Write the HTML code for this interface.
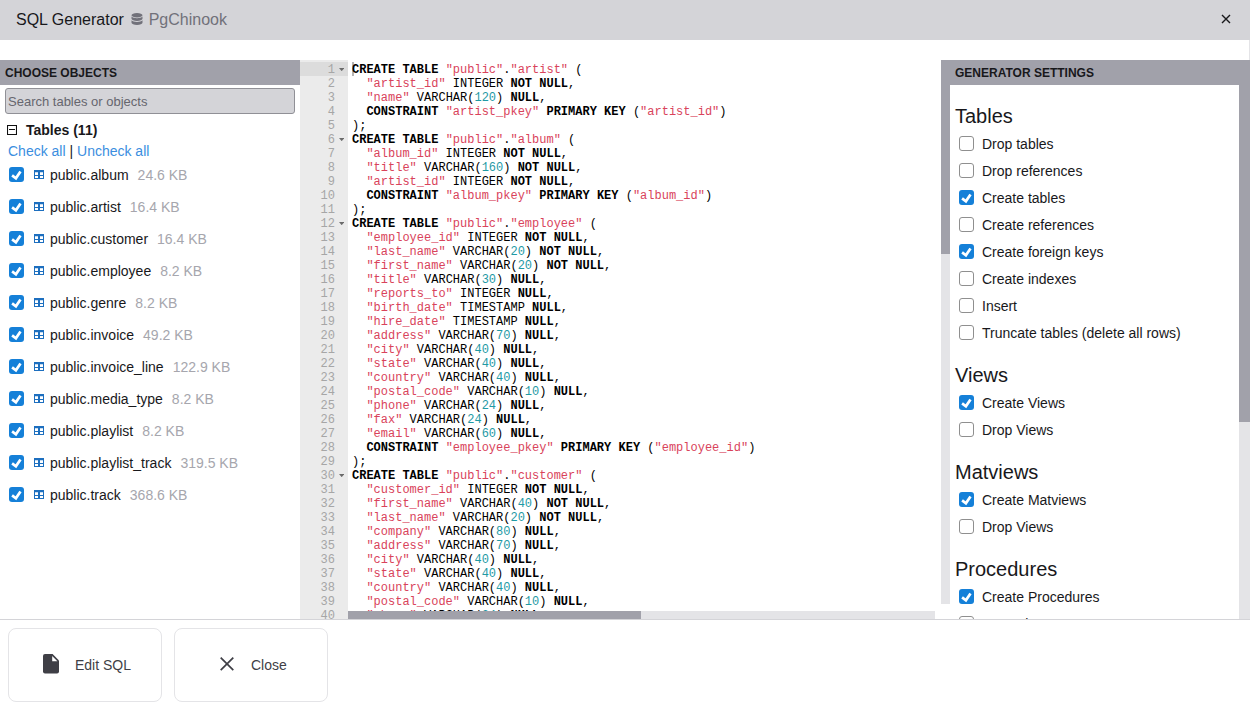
<!DOCTYPE html>
<html><head><meta charset="utf-8">
<style>
*{box-sizing:border-box;margin:0;padding:0}
html,body{width:1250px;height:720px;overflow:hidden;background:#fff;font-family:"Liberation Sans",sans-serif;color:#18181b}
.abs{position:absolute}
#title{left:0;top:0;width:1250px;height:40px;background:#d4d4d8}
#title .t{left:16px;top:11px;font-size:16px;line-height:18px;color:#18181b;white-space:nowrap}
#title .db{left:148.7px;top:11px;font-size:16px;line-height:18px;color:#71717a;white-space:nowrap}
.hdr{height:25px;background:#a1a1aa;font-weight:bold;font-size:12px;line-height:25px;padding-top:1px;color:#18181b;white-space:nowrap}
#search{left:5px;top:88px;width:290px;height:26px;border:1px solid #909096;border-radius:3px;background:#d4d4d8;font-size:13px;line-height:25px;padding-left:2px;color:#66666e;white-space:nowrap}
.cb{position:absolute;width:15px;height:15px;border-radius:3px}
.cb.on{background:#1580d8}
.cb.off{border:1px solid #8f8f8f;background:#fff}
.cb svg{position:absolute;left:0;top:0}
.row{position:absolute;font-size:14px;line-height:16px;white-space:nowrap;color:#18181b}
.row .sz{color:#a6a6ad;margin-left:9px}
.ti{position:absolute;width:10px;height:9px}
#gutter{left:300px;top:60px;width:48px;height:559px;background:#ebebeb;overflow:hidden}
#code{left:348px;top:60px;width:593px;height:551px;overflow:hidden}
.ln{position:absolute;right:13px;font-family:"Liberation Mono",monospace;font-size:12px;line-height:14px;color:#a6a6a6}
.cl{position:absolute;left:4px;font-family:"Liberation Mono",monospace;font-size:12px;line-height:14px;white-space:pre;color:#000}
.k{font-weight:bold}
.s{color:#d9435b}
.n{color:#1f9aa5}
.h{font-size:20px;line-height:24px;white-space:nowrap;color:#18181b}
.opt{font-size:14px;line-height:16px;white-space:nowrap;color:#18181b}
.btn{position:absolute;top:628px;width:154px;height:74px;border:1px solid #e4e4e7;border-radius:8px;background:#fff}
.btn .bt{position:absolute;top:28px;font-size:14px;line-height:16px;color:#3f3f46;white-space:nowrap}
</style></head><body>
<div id="title" class="abs">
  <div class="t abs">SQL Generator</div>
  <svg class="abs" style="left:131px;top:13px" width="12" height="12" viewBox="0 0 12 12"><g fill="#71717a"><ellipse cx="6" cy="2.2" rx="5.5" ry="2.2"/><path d="M0.5 3.6v2.2c0 1.2 2.5 2.2 5.5 2.2s5.5-1 5.5-2.2V3.6c-1 1-3.2 1.6-5.5 1.6S1.5 4.6.5 3.6z"/><path d="M0.5 7.3v2.5c0 1.2 2.5 2.2 5.5 2.2s5.5-1 5.5-2.2V7.3c-1 1-3.2 1.6-5.5 1.6S1.5 8.3.5 7.3z"/></g></svg>
  <div class="db abs">PgChinook</div>
  <svg class="abs" style="left:1221px;top:14px" width="10" height="10" viewBox="0 0 10 10"><path d="M1 1L9 9M9 1L1 9" stroke="#18181b" stroke-width="1.4"/></svg>
</div>

<!-- left panel -->
<div class="hdr abs" style="left:0;top:60px;width:300px;padding-left:5px">CHOOSE OBJECTS</div>
<div id="search" class="abs">Search tables or objects</div>

<svg class="abs" style="left:7px;top:125px" width="10" height="10" viewBox="0 0 10 10"><path d="M0.5 0.5h9v9h-9z" fill="none" stroke="#111" stroke-width="1.1"/><path d="M2 4.5h6" stroke="#111"/></svg>
<div class="row" style="left:26px;top:122px;font-weight:bold">Tables (11)</div>
<div class="row" style="left:8px;top:143px"><span style="color:#3b8ee0">Check all</span> | <span style="color:#3b8ee0">Uncheck all</span></div>
<div class="cb on" style="left:9px;top:167px"><svg width="15" height="15" viewBox="0 0 15 15"><path d="M3.1 8.4L6.9 11.3L11.5 4.4" fill="none" stroke="#fff" stroke-width="2.7"/></svg></div>
<svg class="ti" style="left:34px;top:170px" width="10" height="9" viewBox="0 0 10 9"><path d="M0 0h10v9H0z" fill="#1d6fbf"/><path d="M1 2.3h3v2.7H1zM6 2.3h3v2.7H6zM1 6h3v2H1zM6 6h3v2H6z" fill="#fff"/></svg>
<div class="row" style="left:50px;top:167px">public.album<span class="sz">24.6 KB</span></div>
<div class="cb on" style="left:9px;top:199px"><svg width="15" height="15" viewBox="0 0 15 15"><path d="M3.1 8.4L6.9 11.3L11.5 4.4" fill="none" stroke="#fff" stroke-width="2.7"/></svg></div>
<svg class="ti" style="left:34px;top:202px" width="10" height="9" viewBox="0 0 10 9"><path d="M0 0h10v9H0z" fill="#1d6fbf"/><path d="M1 2.3h3v2.7H1zM6 2.3h3v2.7H6zM1 6h3v2H1zM6 6h3v2H6z" fill="#fff"/></svg>
<div class="row" style="left:50px;top:199px">public.artist<span class="sz">16.4 KB</span></div>
<div class="cb on" style="left:9px;top:231px"><svg width="15" height="15" viewBox="0 0 15 15"><path d="M3.1 8.4L6.9 11.3L11.5 4.4" fill="none" stroke="#fff" stroke-width="2.7"/></svg></div>
<svg class="ti" style="left:34px;top:234px" width="10" height="9" viewBox="0 0 10 9"><path d="M0 0h10v9H0z" fill="#1d6fbf"/><path d="M1 2.3h3v2.7H1zM6 2.3h3v2.7H6zM1 6h3v2H1zM6 6h3v2H6z" fill="#fff"/></svg>
<div class="row" style="left:50px;top:231px">public.customer<span class="sz">16.4 KB</span></div>
<div class="cb on" style="left:9px;top:263px"><svg width="15" height="15" viewBox="0 0 15 15"><path d="M3.1 8.4L6.9 11.3L11.5 4.4" fill="none" stroke="#fff" stroke-width="2.7"/></svg></div>
<svg class="ti" style="left:34px;top:266px" width="10" height="9" viewBox="0 0 10 9"><path d="M0 0h10v9H0z" fill="#1d6fbf"/><path d="M1 2.3h3v2.7H1zM6 2.3h3v2.7H6zM1 6h3v2H1zM6 6h3v2H6z" fill="#fff"/></svg>
<div class="row" style="left:50px;top:263px">public.employee<span class="sz">8.2 KB</span></div>
<div class="cb on" style="left:9px;top:295px"><svg width="15" height="15" viewBox="0 0 15 15"><path d="M3.1 8.4L6.9 11.3L11.5 4.4" fill="none" stroke="#fff" stroke-width="2.7"/></svg></div>
<svg class="ti" style="left:34px;top:298px" width="10" height="9" viewBox="0 0 10 9"><path d="M0 0h10v9H0z" fill="#1d6fbf"/><path d="M1 2.3h3v2.7H1zM6 2.3h3v2.7H6zM1 6h3v2H1zM6 6h3v2H6z" fill="#fff"/></svg>
<div class="row" style="left:50px;top:295px">public.genre<span class="sz">8.2 KB</span></div>
<div class="cb on" style="left:9px;top:327px"><svg width="15" height="15" viewBox="0 0 15 15"><path d="M3.1 8.4L6.9 11.3L11.5 4.4" fill="none" stroke="#fff" stroke-width="2.7"/></svg></div>
<svg class="ti" style="left:34px;top:330px" width="10" height="9" viewBox="0 0 10 9"><path d="M0 0h10v9H0z" fill="#1d6fbf"/><path d="M1 2.3h3v2.7H1zM6 2.3h3v2.7H6zM1 6h3v2H1zM6 6h3v2H6z" fill="#fff"/></svg>
<div class="row" style="left:50px;top:327px">public.invoice<span class="sz">49.2 KB</span></div>
<div class="cb on" style="left:9px;top:359px"><svg width="15" height="15" viewBox="0 0 15 15"><path d="M3.1 8.4L6.9 11.3L11.5 4.4" fill="none" stroke="#fff" stroke-width="2.7"/></svg></div>
<svg class="ti" style="left:34px;top:362px" width="10" height="9" viewBox="0 0 10 9"><path d="M0 0h10v9H0z" fill="#1d6fbf"/><path d="M1 2.3h3v2.7H1zM6 2.3h3v2.7H6zM1 6h3v2H1zM6 6h3v2H6z" fill="#fff"/></svg>
<div class="row" style="left:50px;top:359px">public.invoice_line<span class="sz">122.9 KB</span></div>
<div class="cb on" style="left:9px;top:391px"><svg width="15" height="15" viewBox="0 0 15 15"><path d="M3.1 8.4L6.9 11.3L11.5 4.4" fill="none" stroke="#fff" stroke-width="2.7"/></svg></div>
<svg class="ti" style="left:34px;top:394px" width="10" height="9" viewBox="0 0 10 9"><path d="M0 0h10v9H0z" fill="#1d6fbf"/><path d="M1 2.3h3v2.7H1zM6 2.3h3v2.7H6zM1 6h3v2H1zM6 6h3v2H6z" fill="#fff"/></svg>
<div class="row" style="left:50px;top:391px">public.media_type<span class="sz">8.2 KB</span></div>
<div class="cb on" style="left:9px;top:423px"><svg width="15" height="15" viewBox="0 0 15 15"><path d="M3.1 8.4L6.9 11.3L11.5 4.4" fill="none" stroke="#fff" stroke-width="2.7"/></svg></div>
<svg class="ti" style="left:34px;top:426px" width="10" height="9" viewBox="0 0 10 9"><path d="M0 0h10v9H0z" fill="#1d6fbf"/><path d="M1 2.3h3v2.7H1zM6 2.3h3v2.7H6zM1 6h3v2H1zM6 6h3v2H6z" fill="#fff"/></svg>
<div class="row" style="left:50px;top:423px">public.playlist<span class="sz">8.2 KB</span></div>
<div class="cb on" style="left:9px;top:455px"><svg width="15" height="15" viewBox="0 0 15 15"><path d="M3.1 8.4L6.9 11.3L11.5 4.4" fill="none" stroke="#fff" stroke-width="2.7"/></svg></div>
<svg class="ti" style="left:34px;top:458px" width="10" height="9" viewBox="0 0 10 9"><path d="M0 0h10v9H0z" fill="#1d6fbf"/><path d="M1 2.3h3v2.7H1zM6 2.3h3v2.7H6zM1 6h3v2H1zM6 6h3v2H6z" fill="#fff"/></svg>
<div class="row" style="left:50px;top:455px">public.playlist_track<span class="sz">319.5 KB</span></div>
<div class="cb on" style="left:9px;top:487px"><svg width="15" height="15" viewBox="0 0 15 15"><path d="M3.1 8.4L6.9 11.3L11.5 4.4" fill="none" stroke="#fff" stroke-width="2.7"/></svg></div>
<svg class="ti" style="left:34px;top:490px" width="10" height="9" viewBox="0 0 10 9"><path d="M0 0h10v9H0z" fill="#1d6fbf"/><path d="M1 2.3h3v2.7H1zM6 2.3h3v2.7H6zM1 6h3v2H1zM6 6h3v2H6z" fill="#fff"/></svg>
<div class="row" style="left:50px;top:487px">public.track<span class="sz">368.6 KB</span></div>
<div class="abs" style="left:1249px;top:40px;width:1px;height:20px;background:#e4e4e7"></div>
<div id="gutter" class="abs">
<div class="abs" style="left:0;top:2px;width:48px;height:14px;background:#dcdcdc"></div>
<div class="ln" style="top:3px">1</div>
<svg class="abs" style="left:38.8px;top:8px" width="5.4" height="3.2" viewBox="0 0 5.4 3.2"><path d="M0 0h5.4L2.7 3.2z" fill="#6b6b6b"/></svg>
<div class="ln" style="top:17px">2</div>
<div class="ln" style="top:31px">3</div>
<div class="ln" style="top:45px">4</div>
<div class="ln" style="top:59px">5</div>
<div class="ln" style="top:73px">6</div>
<svg class="abs" style="left:38.8px;top:78px" width="5.4" height="3.2" viewBox="0 0 5.4 3.2"><path d="M0 0h5.4L2.7 3.2z" fill="#6b6b6b"/></svg>
<div class="ln" style="top:87px">7</div>
<div class="ln" style="top:101px">8</div>
<div class="ln" style="top:115px">9</div>
<div class="ln" style="top:129px">10</div>
<div class="ln" style="top:143px">11</div>
<div class="ln" style="top:157px">12</div>
<svg class="abs" style="left:38.8px;top:162px" width="5.4" height="3.2" viewBox="0 0 5.4 3.2"><path d="M0 0h5.4L2.7 3.2z" fill="#6b6b6b"/></svg>
<div class="ln" style="top:171px">13</div>
<div class="ln" style="top:185px">14</div>
<div class="ln" style="top:199px">15</div>
<div class="ln" style="top:213px">16</div>
<div class="ln" style="top:227px">17</div>
<div class="ln" style="top:241px">18</div>
<div class="ln" style="top:255px">19</div>
<div class="ln" style="top:269px">20</div>
<div class="ln" style="top:283px">21</div>
<div class="ln" style="top:297px">22</div>
<div class="ln" style="top:311px">23</div>
<div class="ln" style="top:325px">24</div>
<div class="ln" style="top:339px">25</div>
<div class="ln" style="top:353px">26</div>
<div class="ln" style="top:367px">27</div>
<div class="ln" style="top:381px">28</div>
<div class="ln" style="top:395px">29</div>
<div class="ln" style="top:409px">30</div>
<svg class="abs" style="left:38.8px;top:414px" width="5.4" height="3.2" viewBox="0 0 5.4 3.2"><path d="M0 0h5.4L2.7 3.2z" fill="#6b6b6b"/></svg>
<div class="ln" style="top:423px">31</div>
<div class="ln" style="top:437px">32</div>
<div class="ln" style="top:451px">33</div>
<div class="ln" style="top:465px">34</div>
<div class="ln" style="top:479px">35</div>
<div class="ln" style="top:493px">36</div>
<div class="ln" style="top:507px">37</div>
<div class="ln" style="top:521px">38</div>
<div class="ln" style="top:535px">39</div>
<div class="ln" style="top:549px">40</div>
</div>
<div id="code" class="abs">
<div class="abs" style="left:4px;top:2px;width:2px;height:14px;background:#b4b4b4"></div>
<div class="cl" style="top:3px"><span class="k">CREATE</span> <span class="k">TABLE</span> <span class="s">&quot;public&quot;</span>.<span class="s">&quot;artist&quot;</span> (</div>
<div class="cl" style="top:17px">  <span class="s">&quot;artist_id&quot;</span> INTEGER <span class="k">NOT</span> <span class="k">NULL</span>,</div>
<div class="cl" style="top:31px">  <span class="s">&quot;name&quot;</span> VARCHAR(<span class="n">120</span>) <span class="k">NULL</span>,</div>
<div class="cl" style="top:45px">  <span class="k">CONSTRAINT</span> <span class="s">&quot;artist_pkey&quot;</span> <span class="k">PRIMARY</span> <span class="k">KEY</span> (<span class="s">&quot;artist_id&quot;</span>)</div>
<div class="cl" style="top:59px">);</div>
<div class="cl" style="top:73px"><span class="k">CREATE</span> <span class="k">TABLE</span> <span class="s">&quot;public&quot;</span>.<span class="s">&quot;album&quot;</span> (</div>
<div class="cl" style="top:87px">  <span class="s">&quot;album_id&quot;</span> INTEGER <span class="k">NOT</span> <span class="k">NULL</span>,</div>
<div class="cl" style="top:101px">  <span class="s">&quot;title&quot;</span> VARCHAR(<span class="n">160</span>) <span class="k">NOT</span> <span class="k">NULL</span>,</div>
<div class="cl" style="top:115px">  <span class="s">&quot;artist_id&quot;</span> INTEGER <span class="k">NOT</span> <span class="k">NULL</span>,</div>
<div class="cl" style="top:129px">  <span class="k">CONSTRAINT</span> <span class="s">&quot;album_pkey&quot;</span> <span class="k">PRIMARY</span> <span class="k">KEY</span> (<span class="s">&quot;album_id&quot;</span>)</div>
<div class="cl" style="top:143px">);</div>
<div class="cl" style="top:157px"><span class="k">CREATE</span> <span class="k">TABLE</span> <span class="s">&quot;public&quot;</span>.<span class="s">&quot;employee&quot;</span> (</div>
<div class="cl" style="top:171px">  <span class="s">&quot;employee_id&quot;</span> INTEGER <span class="k">NOT</span> <span class="k">NULL</span>,</div>
<div class="cl" style="top:185px">  <span class="s">&quot;last_name&quot;</span> VARCHAR(<span class="n">20</span>) <span class="k">NOT</span> <span class="k">NULL</span>,</div>
<div class="cl" style="top:199px">  <span class="s">&quot;first_name&quot;</span> VARCHAR(<span class="n">20</span>) <span class="k">NOT</span> <span class="k">NULL</span>,</div>
<div class="cl" style="top:213px">  <span class="s">&quot;title&quot;</span> VARCHAR(<span class="n">30</span>) <span class="k">NULL</span>,</div>
<div class="cl" style="top:227px">  <span class="s">&quot;reports_to&quot;</span> INTEGER <span class="k">NULL</span>,</div>
<div class="cl" style="top:241px">  <span class="s">&quot;birth_date&quot;</span> TIMESTAMP <span class="k">NULL</span>,</div>
<div class="cl" style="top:255px">  <span class="s">&quot;hire_date&quot;</span> TIMESTAMP <span class="k">NULL</span>,</div>
<div class="cl" style="top:269px">  <span class="s">&quot;address&quot;</span> VARCHAR(<span class="n">70</span>) <span class="k">NULL</span>,</div>
<div class="cl" style="top:283px">  <span class="s">&quot;city&quot;</span> VARCHAR(<span class="n">40</span>) <span class="k">NULL</span>,</div>
<div class="cl" style="top:297px">  <span class="s">&quot;state&quot;</span> VARCHAR(<span class="n">40</span>) <span class="k">NULL</span>,</div>
<div class="cl" style="top:311px">  <span class="s">&quot;country&quot;</span> VARCHAR(<span class="n">40</span>) <span class="k">NULL</span>,</div>
<div class="cl" style="top:325px">  <span class="s">&quot;postal_code&quot;</span> VARCHAR(<span class="n">10</span>) <span class="k">NULL</span>,</div>
<div class="cl" style="top:339px">  <span class="s">&quot;phone&quot;</span> VARCHAR(<span class="n">24</span>) <span class="k">NULL</span>,</div>
<div class="cl" style="top:353px">  <span class="s">&quot;fax&quot;</span> VARCHAR(<span class="n">24</span>) <span class="k">NULL</span>,</div>
<div class="cl" style="top:367px">  <span class="s">&quot;email&quot;</span> VARCHAR(<span class="n">60</span>) <span class="k">NULL</span>,</div>
<div class="cl" style="top:381px">  <span class="k">CONSTRAINT</span> <span class="s">&quot;employee_pkey&quot;</span> <span class="k">PRIMARY</span> <span class="k">KEY</span> (<span class="s">&quot;employee_id&quot;</span>)</div>
<div class="cl" style="top:395px">);</div>
<div class="cl" style="top:409px"><span class="k">CREATE</span> <span class="k">TABLE</span> <span class="s">&quot;public&quot;</span>.<span class="s">&quot;customer&quot;</span> (</div>
<div class="cl" style="top:423px">  <span class="s">&quot;customer_id&quot;</span> INTEGER <span class="k">NOT</span> <span class="k">NULL</span>,</div>
<div class="cl" style="top:437px">  <span class="s">&quot;first_name&quot;</span> VARCHAR(<span class="n">40</span>) <span class="k">NOT</span> <span class="k">NULL</span>,</div>
<div class="cl" style="top:451px">  <span class="s">&quot;last_name&quot;</span> VARCHAR(<span class="n">20</span>) <span class="k">NOT</span> <span class="k">NULL</span>,</div>
<div class="cl" style="top:465px">  <span class="s">&quot;company&quot;</span> VARCHAR(<span class="n">80</span>) <span class="k">NULL</span>,</div>
<div class="cl" style="top:479px">  <span class="s">&quot;address&quot;</span> VARCHAR(<span class="n">70</span>) <span class="k">NULL</span>,</div>
<div class="cl" style="top:493px">  <span class="s">&quot;city&quot;</span> VARCHAR(<span class="n">40</span>) <span class="k">NULL</span>,</div>
<div class="cl" style="top:507px">  <span class="s">&quot;state&quot;</span> VARCHAR(<span class="n">40</span>) <span class="k">NULL</span>,</div>
<div class="cl" style="top:521px">  <span class="s">&quot;country&quot;</span> VARCHAR(<span class="n">40</span>) <span class="k">NULL</span>,</div>
<div class="cl" style="top:535px">  <span class="s">&quot;postal_code&quot;</span> VARCHAR(<span class="n">10</span>) <span class="k">NULL</span>,</div>
<div class="cl" style="top:549px">  <span class="s">&quot;phone&quot;</span> VARCHAR(<span class="n">24</span>) <span class="k">NULL</span>,</div>
</div>
<div class="abs" style="left:941px;top:60px;width:9px;height:544px;background:#e4e4e7"></div>
<div class="abs" style="left:941px;top:60px;width:9px;height:194px;background:#a1a1aa"></div>
<div class="abs" style="left:348px;top:611px;width:587px;height:8px;background:#e4e4e7"></div>
<div class="abs" style="left:348px;top:611px;width:293px;height:8px;background:#a1a1aa"></div>
<div class="hdr abs" style="left:941px;top:60px;width:309px;padding-left:14px">GENERATOR SETTINGS</div>
<div class="abs" style="left:1239px;top:85px;width:11px;height:534px;background:#e4e4e7"></div>
<div class="abs" style="left:1239px;top:60px;width:11px;height:362px;background:#a1a1aa"></div>
<div class="abs" style="left:950px;top:85px;width:289px;height:534px;overflow:hidden">
<div class="h abs" style="left:5px;top:19.3px">Tables</div>
<div class="cb off" style="left:9px;top:51.30000000000001px"></div>
<div class="opt abs" style="left:32px;top:51.3px">Drop tables</div>
<div class="cb off" style="left:9px;top:78.30000000000001px"></div>
<div class="opt abs" style="left:32px;top:78.3px">Drop references</div>
<div class="cb on" style="left:9px;top:105.30000000000001px"><svg width="15" height="15" viewBox="0 0 15 15"><path d="M3.1 8.4L6.9 11.3L11.5 4.4" fill="none" stroke="#fff" stroke-width="2.7"/></svg></div>
<div class="opt abs" style="left:32px;top:105.3px">Create tables</div>
<div class="cb off" style="left:9px;top:132.3px"></div>
<div class="opt abs" style="left:32px;top:132.3px">Create references</div>
<div class="cb on" style="left:9px;top:159.3px"><svg width="15" height="15" viewBox="0 0 15 15"><path d="M3.1 8.4L6.9 11.3L11.5 4.4" fill="none" stroke="#fff" stroke-width="2.7"/></svg></div>
<div class="opt abs" style="left:32px;top:159.3px">Create foreign keys</div>
<div class="cb off" style="left:9px;top:186.3px"></div>
<div class="opt abs" style="left:32px;top:186.3px">Create indexes</div>
<div class="cb off" style="left:9px;top:213.3px"></div>
<div class="opt abs" style="left:32px;top:213.3px">Insert</div>
<div class="cb off" style="left:9px;top:240.3px"></div>
<div class="opt abs" style="left:32px;top:240.3px">Truncate tables (delete all rows)</div>
<div class="h abs" style="left:5px;top:278.3px">Views</div>
<div class="cb on" style="left:9px;top:310.3px"><svg width="15" height="15" viewBox="0 0 15 15"><path d="M3.1 8.4L6.9 11.3L11.5 4.4" fill="none" stroke="#fff" stroke-width="2.7"/></svg></div>
<div class="opt abs" style="left:32px;top:310.3px">Create Views</div>
<div class="cb off" style="left:9px;top:337.3px"></div>
<div class="opt abs" style="left:32px;top:337.3px">Drop Views</div>
<div class="h abs" style="left:5px;top:375.3px">Matviews</div>
<div class="cb on" style="left:9px;top:407.3px"><svg width="15" height="15" viewBox="0 0 15 15"><path d="M3.1 8.4L6.9 11.3L11.5 4.4" fill="none" stroke="#fff" stroke-width="2.7"/></svg></div>
<div class="opt abs" style="left:32px;top:407.3px">Create Matviews</div>
<div class="cb off" style="left:9px;top:434.29999999999995px"></div>
<div class="opt abs" style="left:32px;top:434.3px">Drop Views</div>
<div class="h abs" style="left:5px;top:472.3px">Procedures</div>
<div class="cb on" style="left:9px;top:504.29999999999995px"><svg width="15" height="15" viewBox="0 0 15 15"><path d="M3.1 8.4L6.9 11.3L11.5 4.4" fill="none" stroke="#fff" stroke-width="2.7"/></svg></div>
<div class="opt abs" style="left:32px;top:504.3px">Create Procedures</div>
<div class="cb off" style="left:9px;top:531.3px"></div>
<div class="opt abs" style="left:32px;top:531.3px">Drop Views</div>
</div>
<div class="abs" style="left:0;top:619px;width:1250px;height:1px;background:#d4d4d8"></div>
<div class="btn" style="left:8px"><svg class="abs" style="left:34px;top:25px" width="16" height="20" viewBox="0 0 16 20"><path d="M2 0H9.6L16 6.4V17.6a2 2 0 0 1-2 2H2a2 2 0 0 1-2-2V2a2 2 0 0 1 2-2z" fill="#3f3f46"/><path d="M9.2 1.9V7.2H14.4z" fill="#fff"/></svg><div class="bt" style="left:66px">Edit SQL</div></div>
<div class="btn" style="left:174px"><svg class="abs" style="left:45px;top:28px" width="15" height="15" viewBox="0 0 15 15"><path d="M0.7 0.6L13.3 13.2M13.3 0.6L0.7 13.2" stroke="#3f3f46" stroke-width="1.7"/></svg><div class="bt" style="left:76px">Close</div></div>
</body></html>
